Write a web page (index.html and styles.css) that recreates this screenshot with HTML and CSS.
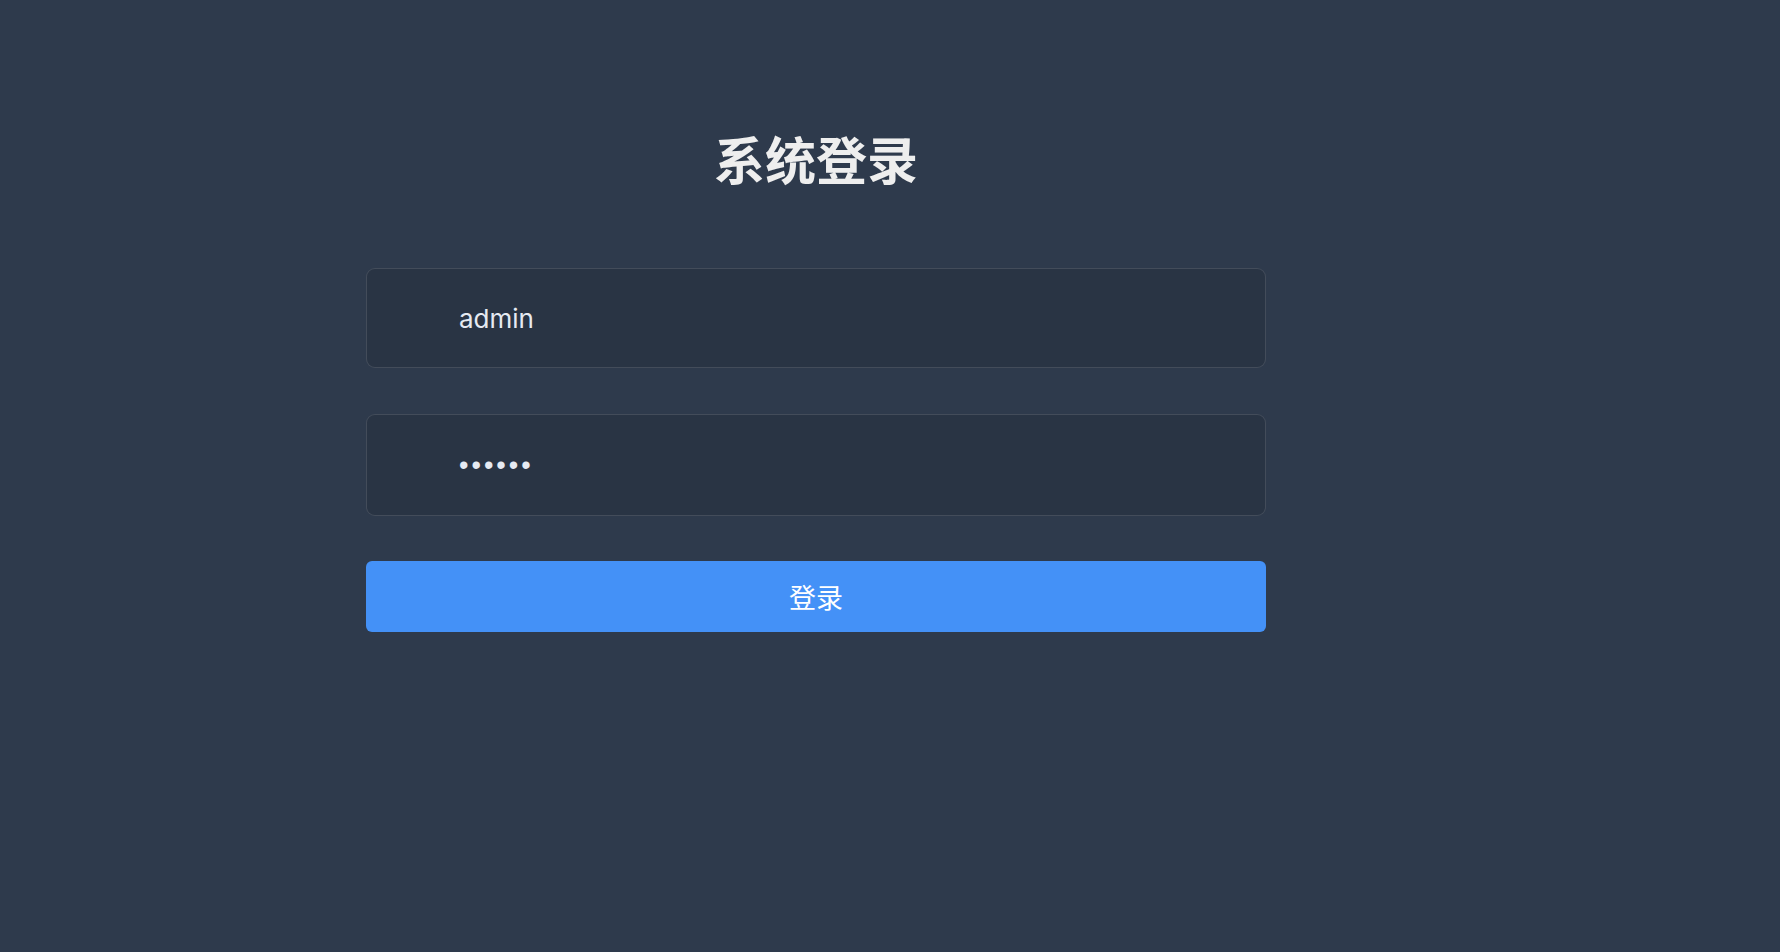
FILE: index.html
```html
<!DOCTYPE html>
<html lang="zh-CN">
<head>
<meta charset="utf-8">
<title>系统登录</title>
<link rel="stylesheet" href="styles.css">
</head>
<body>
<div class="page">
  <form class="login">
    <h3 class="title">系统登录</h3>
    <div class="field">
      <input class="field-input" type="text" value="admin">
    </div>
    <div class="field field-pwd">
      <input class="field-input pwd" type="password" value="111111">
    </div>
    <button class="btn" type="button">登录</button>
  </form>
</div>
</body>
</html>
```
FILE: styles.css
```css
html, body {
  margin: 0;
  padding: 0;
  height: 100%;
}
body {
  background: #2e3a4c;
  font-family: "Inter", "Noto Sans CJK SC", sans-serif;
}
.page {
  min-height: 100%;
}
.login {
  width: 900px;
  margin-left: 366px;
  padding-top: 133px;
  display: flex;
  flex-direction: column;
}
.title {
  margin: 0 0 84px;
  font-family: "Noto Sans CJK SC", sans-serif;
  font-size: 51px;
  line-height: 51px;
  font-weight: 700;
  color: #eeeeee;
  text-align: center;
}
.field {
  box-sizing: border-box;
  height: 100px;
  border: 1.5px solid rgba(255, 255, 255, 0.12);
  background: #293444;
  border-radius: 9px;
  margin-bottom: 46px;
  display: flex;
  align-items: center;
}
.field-pwd {
  height: 102px;
  margin-bottom: 45px;
}
.field-input {
  flex: 1;
  height: 100%;
  box-sizing: border-box;
  background: transparent;
  border: 0;
  outline: none;
  padding: 0 20px 0 92px;
  font-family: "Inter", "Noto Sans CJK SC", sans-serif;
  font-size: 26px;
  color: #e6eaf2;
}
.pwd {
  font-family: "Liberation Sans", sans-serif;
  font-size: 27px;
  letter-spacing: 3px;
}
.btn {
  height: 71px;
  border: 0;
  border-radius: 6px;
  background: #4491f7;
  color: #ffffff;
  font-family: "Noto Sans CJK SC", sans-serif;
  font-size: 27px;
  padding: 0;
  cursor: pointer;
}
```
